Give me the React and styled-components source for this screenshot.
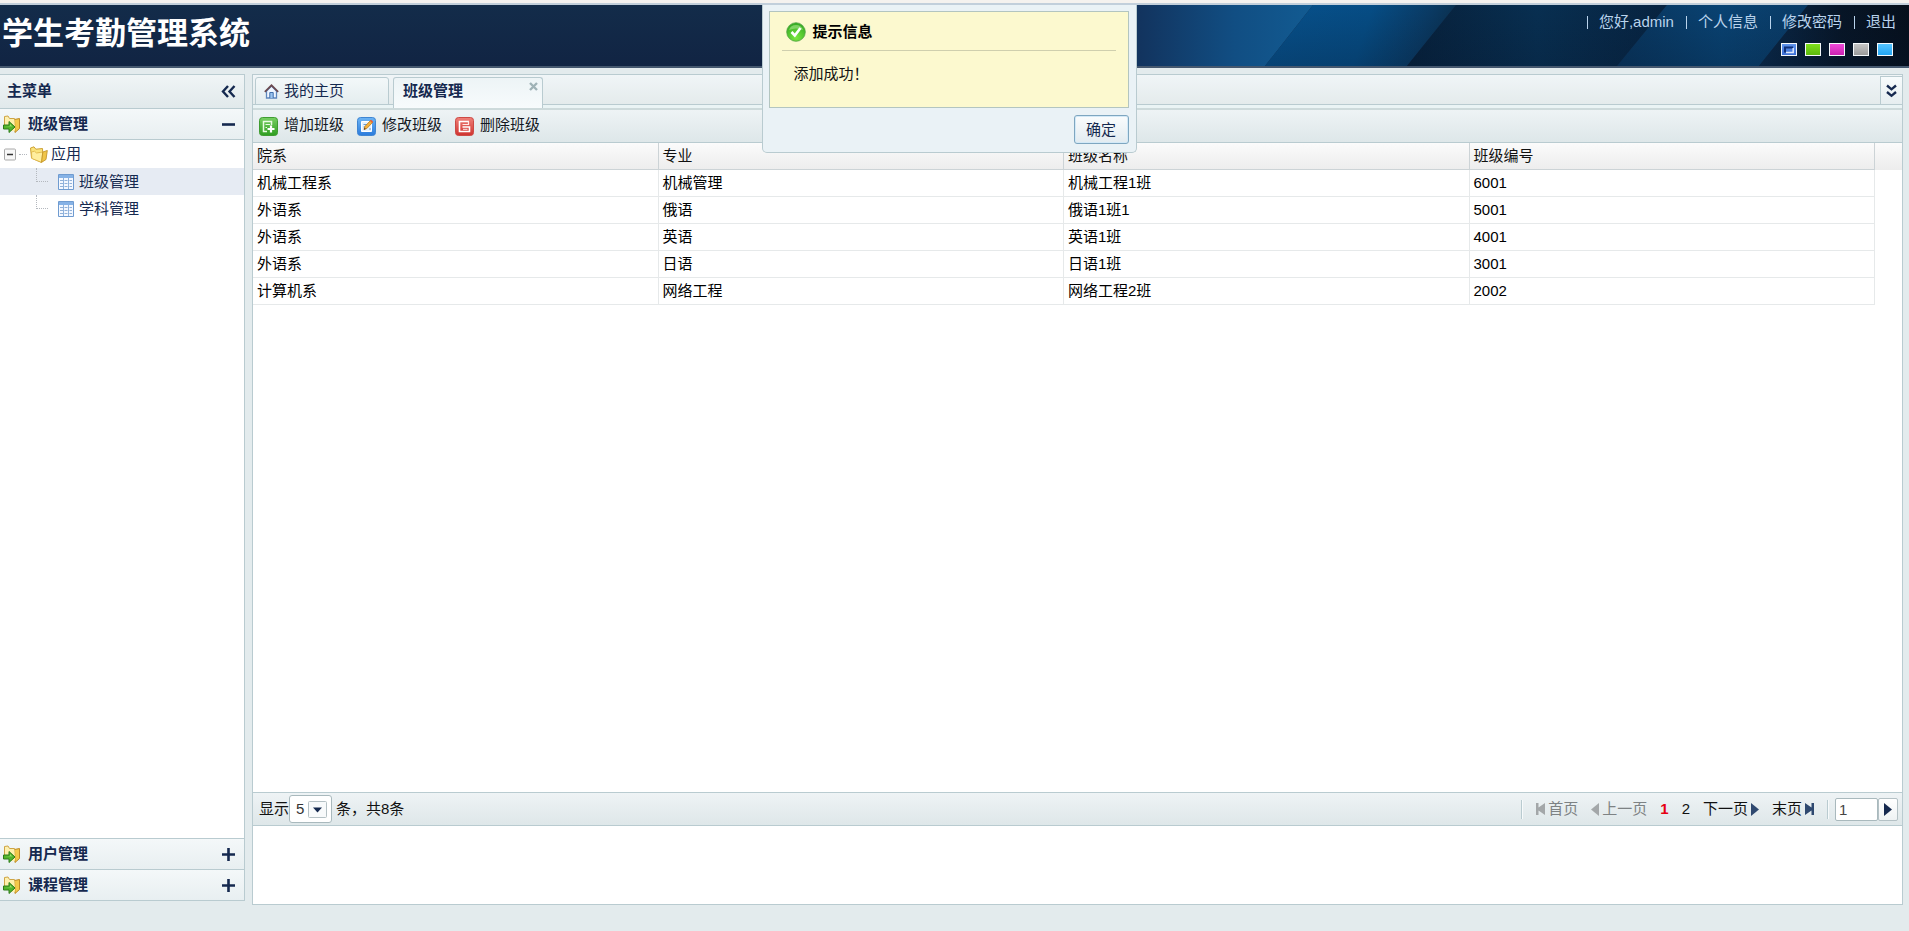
import React from "react";
import styled, { createGlobalStyle } from "styled-components";

const LINE = "#b9cbd0";
const NAVY = "#15294f";

const GlobalStyle = createGlobalStyle`
  * { box-sizing: border-box; }
  body { margin: 0; background: #e3ebed; }
  body, button, input, select {
    font: 15px/22px "Liberation Sans", "Noto Sans CJK SC", sans-serif;
  }
  button { padding: 0; border: 0; background: none; color: inherit; cursor: pointer; }
  a { color: inherit; text-decoration: none; }
  ul { margin: 0; padding: 0; list-style: none; }
  svg { display: block; flex: none; }
`;

const Page = styled.div`
  position: relative;
  display: flex;
  flex-direction: column;
  min-height: 100vh;
  border-top: 3px solid #f5f2ef;
`;

const Header = styled.header`
  position: relative;
  display: flex;
  justify-content: space-between;
  height: 65px;
  border-top: 2px solid #c2cfdb;
  border-bottom: 2px solid #45586f;
  background: linear-gradient(#132c4a, #112443);
`;

const HeaderArt = styled.svg`
  position: absolute;
  top: 0;
  right: 0;
`;

const SystemName = styled.h1`
  margin: 0;
  padding: 7px 0 0 2px;
  font-size: 31px;
  line-height: 44px;
  font-weight: bold;
  color: #fff;
`;

const UserArea = styled.div`
  position: relative;
  display: flex;
  flex-direction: column;
  align-items: flex-end;
  gap: 10px;
  padding: 6px 13px 0 0;
`;

const UserLinks = styled.nav`
  display: flex;
  align-items: center;
  gap: 11px;
  color: #b9d3ec;
`;

const LinkBar = styled.span`
  width: 2px;
  height: 13px;
  border-right: 1px solid #b9d3ec;
`;

const Swatches = styled.div`
  display: flex;
  gap: 8px;
  padding-right: 3px;
`;

const Swatch = styled.button`
  width: 16px;
  height: 13px;
  border: 1px solid #f4f8fb;
  background: ${(p) => p.$fill};
`;

const Main = styled.main`
  display: flex;
  flex: 1;
  align-items: stretch;
  gap: 7px;
  padding: 6px 6px 26px 0;
`;

const Sidebar = styled.aside`
  display: flex;
  flex-direction: column;
  flex: none;
  width: 245px;
  margin-bottom: 4px;
  border: 1px solid ${LINE};
  border-left: 0;
  background: #fff;
  color: ${NAVY};
`;

const SidebarTitle = styled.div`
  display: flex;
  align-items: center;
  justify-content: space-between;
  height: 34px;
  padding: 0 8px 1px 7px;
  border-bottom: 1px solid ${LINE};
  background: linear-gradient(#f0f5f6, #e1e9eb);
  font-weight: bold;
`;

const SectionButton = styled.button`
  display: flex;
  align-items: center;
  gap: 7px;
  width: 100%;
  height: ${(p) => (p.$last ? 30 : 31)}px;
  padding: 0 9px 0 3px;
  border-bottom: ${(p) => (p.$last ? 0 : 1)}px solid ${LINE};
  background: linear-gradient(#f4f8f9, #e8eff1);
  font-weight: bold;
  text-align: left;
  span { flex: 1; }
`;

const SectionStack = styled.div`
  border-top: 1px solid ${LINE};
`;

const Tree = styled.ul`
  flex: 1;
`;

const TreeRoot = styled.div`
  display: flex;
  align-items: center;
  gap: 3px;
  height: 28px;
  padding-left: 4px;
`;

const TreeLeaf = styled.a`
  display: flex;
  align-items: center;
  gap: 5px;
  height: 27px;
  padding-left: 36px;
  background: ${(p) => (p.$active ? "#e6ebf3" : "transparent")};
`;

const Branch = styled.span`
  align-self: flex-start;
  width: 12px;
  height: 14px;
  margin-right: 5px;
  border-left: 1px dotted #b4b8be;
  border-bottom: 1px dotted #b4b8be;
`;

const Stub = styled.span`
  width: 8px;
  border-top: 1px dotted #b4b8be;
`;

const FoldButton = styled.button`
  display: flex;
`;

const Content = styled.section`
  display: flex;
  flex-direction: column;
  flex: 1;
  min-width: 0;
  border: 1px solid ${LINE};
  background: #fff;
`;

const TabBar = styled.div`
  display: flex;
  align-items: flex-end;
  gap: 4px;
  height: 35px;
  padding: 0 0 0 2px;
  border-bottom: 2px solid #cddadb;
  background: linear-gradient(#f0f5f7 0, #e4ebec 29px, ${LINE} 29px, ${LINE} 30px, #eaf4f5 30px);
`;

const Tab = styled.button`
  display: flex;
  align-items: center;
  width: ${(p) => p.$width}px;
  height: ${(p) => (p.$active ? 31 : 28)}px;
  margin-bottom: ${(p) => (p.$active ? 0 : 3)}px;
  padding: 0 4px ${(p) => (p.$active ? 4 : 0)}px ${(p) => (p.$active ? 9 : 8)}px;
  border: 1px solid ${LINE};
  border-bottom-width: ${(p) => (p.$active ? 0 : 1)}px;
  border-radius: 3px 3px 0 0;
  background: ${(p) => (p.$active ? "linear-gradient(#edf4f6, #f7fbfc)" : "linear-gradient(#f3f8f9, #e4edef)")};
  font-weight: ${(p) => (p.$active ? "bold" : "normal")};
  color: ${NAVY};
  gap: 5px;
  text-align: left;
  span { flex: 1; }
`;

const CloseMark = styled.svg`
  align-self: flex-start;
  margin-top: 4px;
`;

const TabMenu = styled.button`
  display: flex;
  align-items: center;
  justify-content: center;
  width: 22px;
  height: 29px;
  margin: 0 0 3px auto;
  border: 1px solid ${LINE};
  border-right: 0;
  background: linear-gradient(#f7fbfc, #e6eef0);
`;

const Toolbar = styled.div`
  display: flex;
  align-items: center;
  gap: 13px;
  height: 33px;
  padding-left: 6px;
  border-bottom: 1px solid ${LINE};
  background: linear-gradient(#eef3f5, #dee7e9);
`;

const ToolButton = styled.button`
  display: flex;
  align-items: center;
  gap: 6px;
  color: #14181f;
  span { padding-bottom: 3px; }
`;

const GridArea = styled.div`
  flex: 1;
`;

const Table = styled.table`
  width: 100%;
  table-layout: fixed;
  border-collapse: separate;
  border-spacing: 0;
`;

const HeadCell = styled.th`
  height: 27px;
  padding: 0 4px;
  border-right: 1px solid #ccd3d6;
  border-bottom: 1px solid #ccd3d6;
  background: linear-gradient(#fbfbfb, #ededed);
  font-weight: normal;
  text-align: left;
  color: #111;
  &:last-child { width: 27px; border-right: 0; border-bottom-color: #ededed; }
`;

const Cell = styled.td`
  height: 27px;
  padding: 0 4px;
  border-right: 1px solid #e6e9ea;
  border-bottom: 1px solid #e6e9ea;
  color: #000;
  &:last-child { border: 0; }
`;

const Pager = styled.div`
  display: flex;
  align-items: center;
  justify-content: space-between;
  height: 34px;
  padding: 0 4px 0 6px;
  border: solid ${LINE};
  border-width: 1px 0;
  background: linear-gradient(#eef3f5, #dee7e9);
  color: #111;
`;

const PageSize = styled.label`
  display: flex;
  align-items: center;
`;

const SelectBox = styled.div`
  display: grid;
  align-items: center;
  width: 43px;
  height: 28px;
  margin-right: 4px;
  > * { grid-area: 1 / 1; }
  svg { justify-self: end; margin-right: 5px; pointer-events: none; }
`;

const SizeSelect = styled.select`
  width: 43px;
  height: 28px;
  padding: 0 6px;
  appearance: none;
  border: 1px solid #a9b9bd;
  border-radius: 3px;
  background: #fff;
  color: #333;
`;

const PageLinks = styled.div`
  display: flex;
  align-items: center;
  gap: 13px;
`;

const PageLink = styled.a`
  display: flex;
  align-items: center;
  gap: 3px;
  color: ${(p) => (p.$disabled ? "#7d8284" : p.$current ? "#e60012" : "#111")};
  font-weight: ${(p) => (p.$current ? "bold" : "normal")};
`;

const Divider = styled.span`
  width: 2px;
  height: 19px;
  border-left: 1px solid ${LINE};
  border-right: 1px solid #f7fafb;
`;

const GoTo = styled.form`
  display: flex;
  margin-left: -7px;
`;

const PageInput = styled.input`
  width: 43px;
  height: 23px;
  padding: 0 3px;
  border: 1px solid #a9b9bd;
  border-radius: 2px;
  background: #fff;
  color: #444;
`;

const GoButton = styled.button`
  display: flex;
  align-items: center;
  justify-content: center;
  width: 20px;
  height: 23px;
  border: 1px solid #b4c1c5;
  border-radius: 2px;
  background: linear-gradient(#fff, #eef2f4);
`;

const BottomPane = styled.div`
  height: 78px;
`;

const Dialog = styled.div`
  position: absolute;
  top: 2px;
  left: calc(50% - 193px);
  width: 375px;
  padding: 6px 7px 6px 6px;
  border: 1px solid ${LINE};
  border-top: 0;
  border-radius: 0 0 5px 5px;
  background: #eaf2f6;
`;

const Notice = styled.div`
  height: 97px;
  padding: 0 12px;
  border: 1px solid #b3c5c0;
  background: #fcf9cf;
`;

const NoticeTitle = styled.h2`
  display: flex;
  align-items: center;
  gap: 7px;
  height: 39px;
  margin: 0;
  padding: 2px 0 0 4px;
  border-bottom: 1px solid #cfcfae;
  font-size: 15px;
  line-height: 22px;
  color: #000;
`;

const NoticeText = styled.p`
  margin: 0;
  padding: 12px;
  color: #111;
`;

const DialogActions = styled.div`
  display: flex;
  justify-content: flex-end;
  padding: 7px 0 2px;
`;

const ConfirmButton = styled.button`
  width: 55px;
  height: 29px;
  border: 1px solid #7ea6c0;
  border-radius: 3px;
  box-shadow: inset 0 0 0 1px #d3e9f7;
  background: linear-gradient(#fafcfd, #e2ebf0);
  color: ${NAVY};
`;

const HeaderBackdrop = () => (
  <HeaderArt width="909" height="61" viewBox="-100 0 909 61" aria-hidden="true">
    <defs>
      <linearGradient id="beamA"><stop offset="0" stopColor="#132a4a" /><stop offset=".45" stopColor="#12345f" /><stop offset=".75" stopColor="#114e83" /><stop offset="1" stopColor="#125b92" /></linearGradient>
      <linearGradient id="beamB" gradientUnits="userSpaceOnUse" x1="190" y1="0" x2="340" y2="50"><stop offset="0" stopColor="#07508a" /><stop offset=".5" stopColor="#064d85" /><stop offset=".85" stopColor="#0a3b65" /><stop offset="1" stopColor="#0a3253" /></linearGradient>
      <linearGradient id="beamC"><stop offset="0" stopColor="#07203a" /><stop offset=".5" stopColor="#082f51" /><stop offset="1" stopColor="#072340" /></linearGradient>
      <linearGradient id="beamD" x1="0" y1="0" x2="1" y2="0"><stop offset="0" stopColor="#09355d" /><stop offset=".55" stopColor="#094373" /><stop offset="1" stopColor="#0a3b66" /></linearGradient>
      <linearGradient id="beamE"><stop offset="0" stopColor="#0a294a" /><stop offset=".55" stopColor="#071526" /><stop offset="1" stopColor="#060f1b" /></linearGradient>
      <linearGradient id="shade" x1="0" y1="0" x2="0" y2="1"><stop offset="0" stopColor="#061830" stopOpacity="0" /><stop offset="1" stopColor="#061830" stopOpacity=".25" /></linearGradient>
    </defs>
    <path d="M-100 0H213L165 61H-100Z" fill="url(#beamA)" />
    <path d="M213 0H356L307 61H165Z" fill="url(#beamB)" />
    <path d="M356 0H567L517 61H307Z" fill="url(#beamC)" />
    <path d="M567 0H708L659 61H517Z" fill="url(#beamD)" />
    <path d="M708 0H809V61H659Z" fill="url(#beamE)" />
    <path d="M213 0H809V61H165Z" fill="url(#shade)" />
  </HeaderArt>
);

const FolderArrowIcon = () => (
  <svg width="18" height="18" viewBox="0 0 18 18" aria-hidden="true">
    <path d="M1.500 14V1.500L5 1l1.500 2.500h5L12 13" fill="#fdf0b0" stroke="#cfa544" />
    <path d="M11.500 4.500l5-1v10l-4.500 4z" fill="#f3c94a" stroke="#bd8b25" />
    <path d="M3 5.500l8.500-1 .5 11-3 1z" fill="#fff1a8" />
    <path d="M.5 10H6V6.500l6 5.500-6 5.500V14H.5z" fill="#52b52b" stroke="#2c7c18" />
    <path d="M1.500 11H7V9l2.500 2.500z" fill="#9be06e" />
  </svg>
);

const FolderIcon = () => (
  <svg width="18" height="17" viewBox="0 0 18 17" aria-hidden="true">
    <path d="M.5 2L4 .8l1.800 2.400 6.700-.7.500 12-2 1.800L1.500 12z" fill="#fbe47c" stroke="#cda136" />
    <path d="M1.500 6l3-.8L6.500 7l6.300-1L11.500 16.300 1.800 12.500z" fill="#ffee9e" stroke="#dcb345" strokeWidth=".8" />
    <path d="M12.800 6l4.500-1.500-1.300 9-4.500 2.900z" fill="#f0c549" stroke="#c4962b" strokeWidth=".9" />
  </svg>
);

const SheetIcon = () => (
  <svg width="16" height="16" viewBox="0 0 16 16" aria-hidden="true">
    <path d="M.5.500h15v15H.500z" fill="#f4f8ff" stroke="#6f9bd0" />
    <path d="M1 1h14v3H1z" fill="#86b2e6" />
    <path d="M5.500 4v11M10.500 4v11" stroke="#8fb2dc" />
    <path d="M2 6.500h3M6.500 6.500h3M11.500 6.500H14M2 9.500h3M6.500 9.500h3M11.500 9.500H14M2 12.500h3M6.500 12.500h3M11.500 12.500H14" stroke="#91b1d8" />
  </svg>
);

const MinusBox = () => (
  <svg width="12" height="13" viewBox="0 0 12 13" aria-hidden="true">
    <rect x=".5" y="1" width="11" height="11" rx="1" fill="#f7f7f7" stroke="#a9a9a9" />
    <path d="M3 6.500h6" stroke="#333" strokeWidth="1.500" />
  </svg>
);

const HomeIcon = () => (
  <svg width="15" height="15" viewBox="0 0 15 15" aria-hidden="true">
    <path d="M2.500 7v7h10V7L7.500 2z" fill="#eff6ff" stroke="#5f87bd" strokeWidth="1.300" />
    <path d="M5.800 14V8.500h3.400V14" fill="#9cc4ee" stroke="#3f6fad" />
    <path d="M.8 7.800L7.500 1.300l6.700 6.500" fill="none" stroke="#6b4a50" strokeWidth="1.700" />
  </svg>
);

const ToolTile = ({ id, top, bottom, edge, children }) => (
  <svg width="19" height="19" viewBox="0 0 19 19" aria-hidden="true">
    <defs><linearGradient id={id} x1="0" y1="0" x2="0" y2="1"><stop stopColor={top} /><stop offset="1" stopColor={bottom} /></linearGradient></defs>
    <rect x=".5" y=".5" width="18" height="18" rx="3" fill={`url(#${id})`} stroke={edge} />
    {children}
  </svg>
);

const AddIcon = () => (
  <ToolTile id="addTile" top="#77cf62" bottom="#2f9d20" edge="#3f9c31">
    <path d="M8 14.500H4.500v-10h8V8" fill="none" stroke="#e9fbe2" strokeWidth="1.500" />
    <path d="M6.500 7.500H11M6.500 10.500H8" stroke="#e9fbe2" />
    <path d="M12 8.500v7M8.500 12h7" stroke="#fff" strokeWidth="2.200" />
  </ToolTile>
);

const EditIcon = () => (
  <ToolTile id="editTile" top="#6db4f4" bottom="#2a7bdc" edge="#3f85d2">
    <path d="M4.500 4.500h10v10h-10z" fill="#e5f2ff" stroke="#fff" />
    <path d="M6.500 7.500h4M6.500 10h2M12 12h2" stroke="#679bd2" />
    <path d="M7 12.500l.8-3L13.500 3.500l2 2L9.800 11.500z" fill="#f5b23c" stroke="#b9791f" strokeWidth=".8" />
    <path d="M13 4l1.200-1.300 2 2L15 6z" fill="#e4603e" />
    <path d="M6.800 12.800l.7-2 1.400 1.200z" fill="#4b3524" />
  </ToolTile>
);

const DeleteIcon = () => (
  <ToolTile id="deleteTile" top="#ef8078" bottom="#cf322f" edge="#cc4a45">
    <path d="M14 4.500H4.500v10H14.500v-4.500H7.500" fill="none" stroke="#fff" strokeWidth="1.600" />
    <path d="M13.500 4.500V7.500H7.500" fill="none" stroke="#ffe9e6" strokeWidth="1.200" />
    <path d="M8 12.300h4.500" stroke="#ffe9e6" />
  </ToolTile>
);

const SuccessIcon = () => (
  <svg width="20" height="20" viewBox="0 0 20 20" aria-hidden="true">
    <defs><radialGradient id="okFill" cx=".5" cy=".8" r=".75"><stop stopColor="#7be83f" /><stop offset="1" stopColor="#35ab24" /></radialGradient></defs>
    <circle cx="10" cy="10" r="9.300" fill="url(#okFill)" stroke="#55a346" strokeWidth=".8" />
    <path d="M3 8a7.400 7.400 0 0 1 14 0q-7-3-14 0" fill="#a7e68c" opacity=".6" />
    <path d="M5.500 10l3.300 3.500L14.500 6" fill="none" stroke="#fff" strokeWidth="2.600" />
  </svg>
);

const PlusMark = ({ open }) => (
  <svg width="13" height="13" viewBox="0 0 13 13" aria-hidden="true">
    <path d={open ? "M0 6.500h13" : "M0 6.500h13M6.500 0v13"} stroke={NAVY} strokeWidth="2.600" />
  </svg>
);

const TriRight = ({ fill = "#2f4970" }) => (
  <svg width="8" height="13" viewBox="0 0 8 13" aria-hidden="true"><path d="M0 0l8 6.500L0 13z" fill={fill} /></svg>
);

const SkipIcon = ({ flip, fill }) => (
  <svg width="9" height="12" viewBox="0 0 9 12" aria-hidden="true">
    <path d={flip ? "M9 0v12H6.500V7.500L0 12V0l6.500 4.500V0z" : "M0 0v12h2.500V7.500L9 12V0L2.500 4.500V0z"} fill={fill} />
  </svg>
);

const SelectArrow = () => (
  <svg width="19" height="17" viewBox="0 0 19 17" aria-hidden="true">
    <rect x=".5" y=".5" width="18" height="16" rx="1" fill="#f8fafb" stroke="#b4c0c4" />
    <path d="M5 6.500h9l-4.500 5z" fill={NAVY} />
  </svg>
);

const USER_LINKS = ["您好,admin", "个人信息", "修改密码", "退出"];
const THEMES = [
  ["蓝色", "linear-gradient(#5f93ea, #3b6fd6)"],
  ["绿色", "linear-gradient(#7fe01c, #5cb80c)"],
  ["粉色", "linear-gradient(#f04ada, #cc22b0)"],
  ["灰色", "linear-gradient(#c6c6c6, #9a9a9a)"],
  ["天蓝", "linear-gradient(#55c4ff, #22a4f2)"],
];
const COLUMNS = ["院系", "专业", "班级名称", "班级编号"];
const ROWS = [
  ["机械工程系", "机械管理", "机械工程1班", "6001"],
  ["外语系", "俄语", "俄语1班1", "5001"],
  ["外语系", "英语", "英语1班", "4001"],
  ["外语系", "日语", "日语1班", "3001"],
  ["计算机系", "网络工程", "网络工程2班", "2002"],
];

const Section = ({ title, open, last }) => (
  <SectionButton type="button" $last={last} aria-expanded={!!open}>
    <FolderArrowIcon />
    <span>{title}</span>
    <PlusMark open={open} />
  </SectionButton>
);

export default function App() {
  return (
    <Page>
      <GlobalStyle />
      <Header>
        <HeaderBackdrop />
        <SystemName>学生考勤管理系统</SystemName>
        <UserArea>
          <UserLinks>
            {USER_LINKS.map((text) => (
              <React.Fragment key={text}>
                <LinkBar />
                <a href="#">{text}</a>
              </React.Fragment>
            ))}
          </UserLinks>
          <Swatches>
            {THEMES.map(([name, fill], i) => (
              <Swatch key={name} type="button" aria-label={name} $fill={fill}>
                {i === 0 && (
                  <svg width="14" height="11" viewBox="0 0 14 11" aria-hidden="true">
                    <path d="M3 8.500V3.500h8" fill="none" stroke="#0d2f78" strokeWidth="2" />
                    <path d="M4 8.500h7.200V4" fill="none" stroke="#dfe9fb" strokeWidth="1.500" />
                  </svg>
                )}
              </Swatch>
            ))}
          </Swatches>
        </UserArea>
      </Header>

      <Main>
        <Sidebar>
          <SidebarTitle>
            主菜单
            <FoldButton type="button" aria-label="折叠">
              <svg width="15" height="13" viewBox="0 0 15 13" aria-hidden="true">
                <path d="M7 1L2 6.500 7 12M13.500 1l-5 5.500 5 5.500" fill="none" stroke={NAVY} strokeWidth="2.400" />
              </svg>
            </FoldButton>
          </SidebarTitle>
          <Section title="班级管理" open />
          <Tree>
            <li>
              <TreeRoot>
                <MinusBox />
                <Stub />
                <FolderIcon />
                应用
              </TreeRoot>
              <ul>
                <li><TreeLeaf href="#" $active><Branch /><SheetIcon />班级管理</TreeLeaf></li>
                <li><TreeLeaf href="#"><Branch /><SheetIcon />学科管理</TreeLeaf></li>
              </ul>
            </li>
          </Tree>
          <SectionStack>
            <Section title="用户管理" />
            <Section title="课程管理" last />
          </SectionStack>
        </Sidebar>

        <Content>
          <TabBar>
            <Tab type="button" $width={134}><HomeIcon /><span>我的主页</span></Tab>
            <Tab type="button" $width={150} $active>
              <span>班级管理</span>
              <CloseMark width="9" height="9" viewBox="0 0 9 9" aria-hidden="true">
                <path d="M1 1l7 7M8 1L1 8" stroke="#9fb2b6" strokeWidth="2.400" />
              </CloseMark>
            </Tab>
            <TabMenu type="button" aria-label="更多标签">
              <svg width="11" height="14" viewBox="0 0 11 14" aria-hidden="true">
                <path d="M1 1.500l4.500 3.800L10 1.500M1 8l4.500 3.800L10 8" fill="none" stroke={NAVY} strokeWidth="2.400" />
              </svg>
            </TabMenu>
          </TabBar>
          <Toolbar>
            <ToolButton type="button"><AddIcon /><span>增加班级</span></ToolButton>
            <ToolButton type="button"><EditIcon /><span>修改班级</span></ToolButton>
            <ToolButton type="button"><DeleteIcon /><span>删除班级</span></ToolButton>
          </Toolbar>
          <GridArea>
            <Table>
              <thead>
                <tr>
                  {COLUMNS.map((c) => <HeadCell key={c} scope="col">{c}</HeadCell>)}
                  <HeadCell as="td" />
                </tr>
              </thead>
              <tbody>
                {ROWS.map((row) => (
                  <tr key={row[3]}>
                    {row.map((value, i) => <Cell key={i}>{value}</Cell>)}
                    <Cell />
                  </tr>
                ))}
              </tbody>
            </Table>
          </GridArea>
          <Pager>
            <PageSize>
              <span>显示</span>
              <SelectBox>
                <SizeSelect defaultValue="5">
                  <option>5</option>
                  <option>10</option>
                </SizeSelect>
                <SelectArrow />
              </SelectBox>
              <span>条，共8条</span>
            </PageSize>
            <PageLinks>
              <Divider />
              <PageLink href="#" $disabled><SkipIcon fill="#a3a7a9" />首页</PageLink>
              <PageLink href="#" $disabled>
                <svg width="8" height="13" viewBox="0 0 8 13" aria-hidden="true"><path d="M8 0L0 6.500 8 13z" fill="#a3a7a9" /></svg>
                上一页
              </PageLink>
              <PageLink href="#" $current>1</PageLink>
              <PageLink href="#">2</PageLink>
              <PageLink href="#">下一页<TriRight /></PageLink>
              <PageLink href="#">末页<SkipIcon flip fill="#2f4970" /></PageLink>
              <Divider />
              <GoTo>
                <PageInput aria-label="页码" defaultValue="1" />
                <GoButton type="button" aria-label="跳转"><TriRight fill={NAVY} /></GoButton>
              </GoTo>
            </PageLinks>
          </Pager>
          <BottomPane />
        </Content>
      </Main>

      <Dialog role="dialog" aria-labelledby="notice-title">
        <Notice>
          <NoticeTitle id="notice-title"><SuccessIcon /><span>提示信息</span></NoticeTitle>
          <NoticeText>添加成功！</NoticeText>
        </Notice>
        <DialogActions>
          <ConfirmButton type="button">确定</ConfirmButton>
        </DialogActions>
      </Dialog>
    </Page>
  );
}
